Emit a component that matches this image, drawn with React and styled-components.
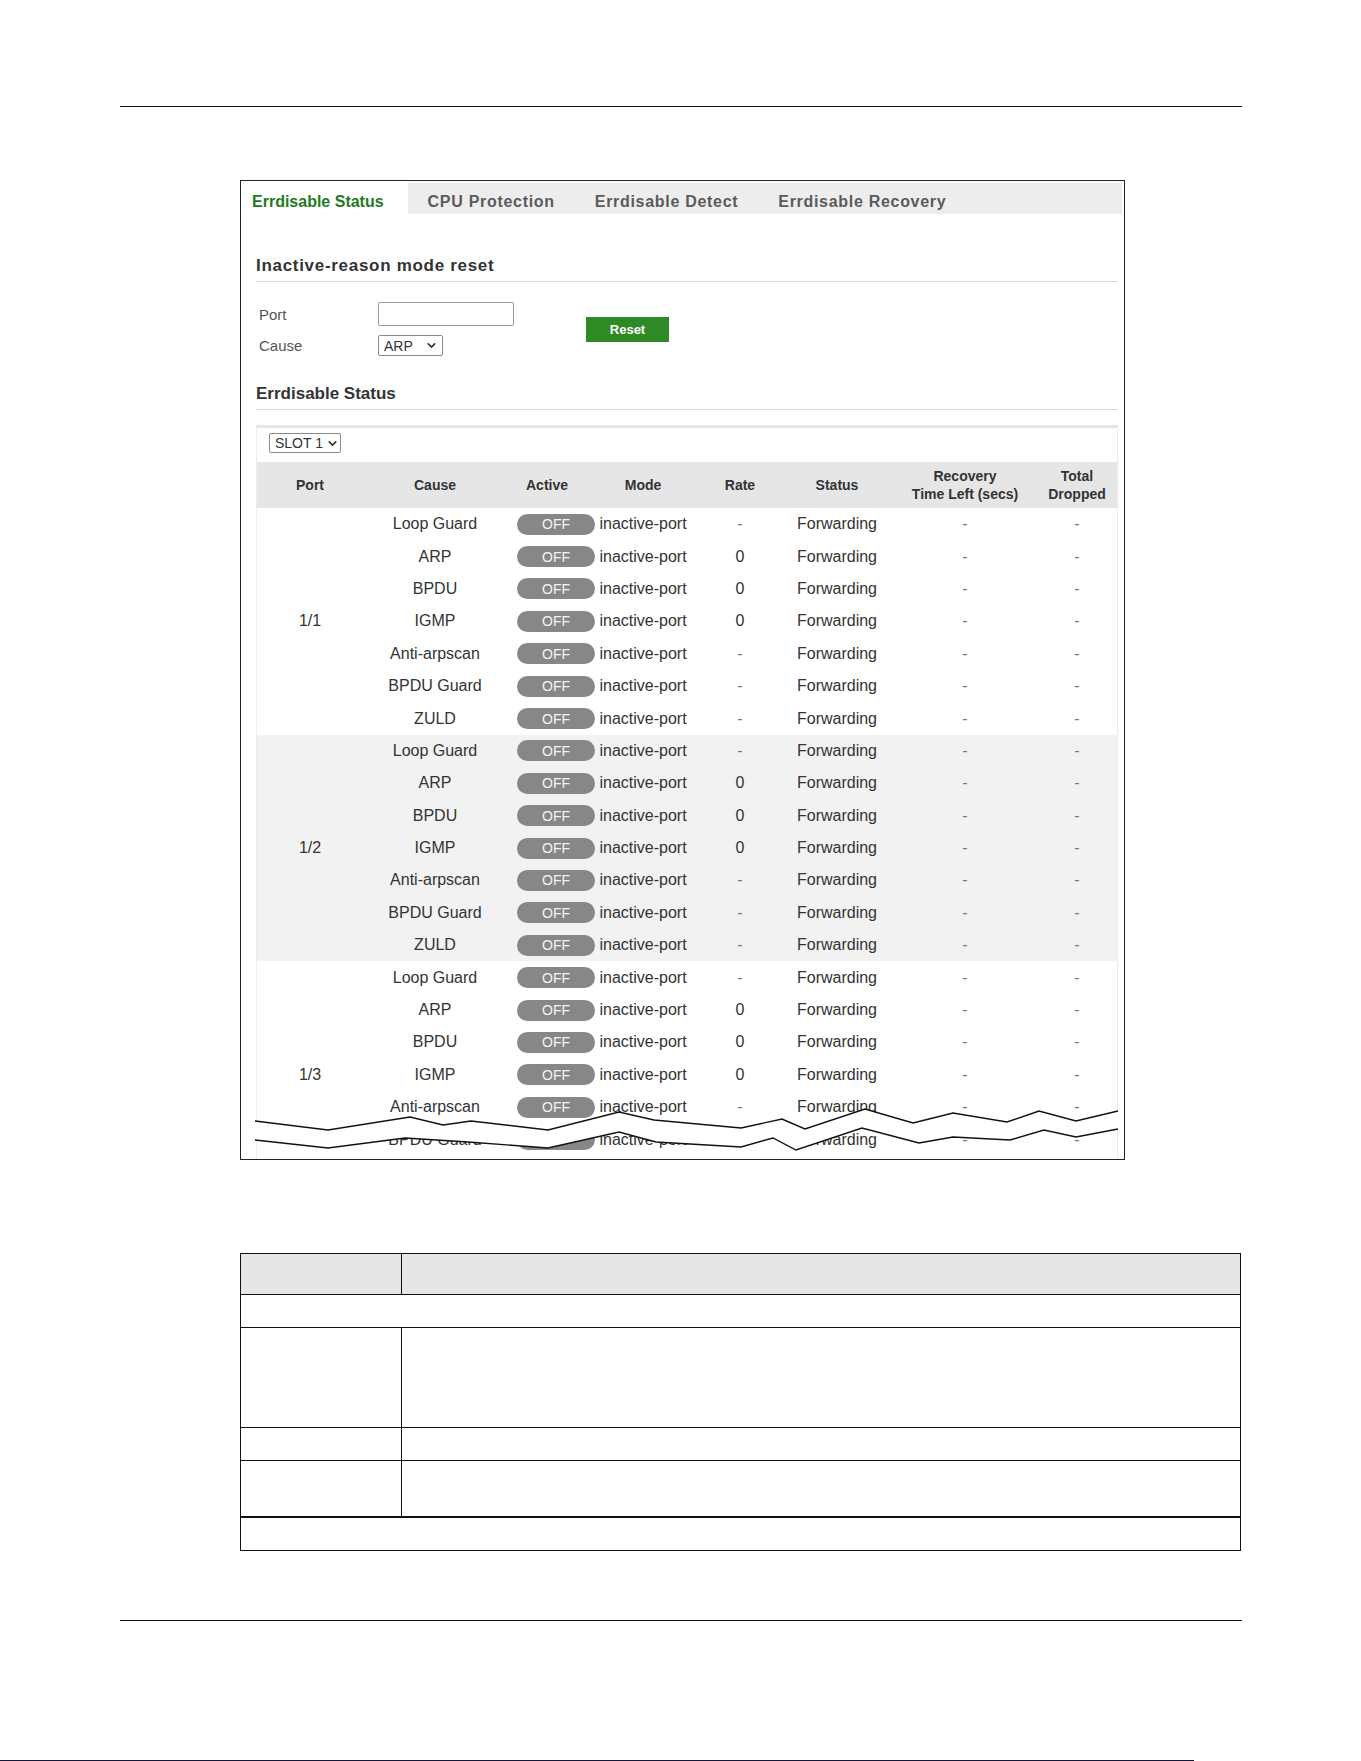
import React from 'react';
import styled, { createGlobalStyle } from 'styled-components';
import { ChevronDown } from 'lucide-react';

const GlobalStyle = createGlobalStyle`
  body {
    margin: 0;
    background: #fff;
    font-family: "Liberation Sans", Arial, sans-serif;
  }
`;

const Page = styled.div`
  width: 1361px;
  height: 1761px;
  display: flex;
  flex-direction: column;
  overflow: hidden;
`;

const Rule = styled.div`
  margin: ${(p) => p.$top}px 0 0 120px;
  width: 1122px;
  border-top: 1px solid #111;
`;

const EdgeLine = styled.div`
  margin-top: auto;
  width: 1194px;
  height: 1px;
  background: #14143a;
`;

const Frame = styled.div`
  position: relative;
  margin: 73px 0 0 240px;
  width: 885px;
  height: 980px;
  box-sizing: border-box;
  border: 1px solid #222;
  padding: 2px 2px 0;
  overflow: hidden;
  background: #fff;
`;

const TabBar = styled.div`
  display: flex;
  height: 31px;
  background: #ededed;
`;

const Tab = styled.div`
  display: flex;
  align-items: center;
  padding: 7px 20px 0;
  font-size: 16px;
  font-weight: bold;
  white-space: nowrap;
  letter-spacing: ${(p) => (p.$active ? 0 : 0.7)}px;
  color: ${(p) => (p.$active ? '#1f7a1f' : '#5b5b5b')};
  background: ${(p) => (p.$active ? '#fff' : 'transparent')};

  &:first-child {
    padding-left: 9px;
    padding-right: 24px;
  }
`;

const Content = styled.div`
  padding: 0 4px 0 13px;
`;

const SectionTitle = styled.div`
  margin-top: ${(p) => p.$top}px;
  padding-bottom: 4px;
  border-bottom: 1px solid #d6d6d6;
  font-size: 17px;
  line-height: 22px;
  font-weight: bold;
  letter-spacing: ${(p) => p.$spacing || 0}px;
  color: #333;
`;

const FormRow = styled.div`
  display: flex;
  align-items: center;
  margin-top: 20px;
  padding-left: 3px;
`;

const FieldGrid = styled.div`
  display: grid;
  grid-template-columns: 119px 136px;
  row-gap: 9px;
  align-items: center;
`;

const Label = styled.span`
  font-size: 15px;
  color: #555;
`;

const TextInput = styled.div`
  width: 136px;
  height: 24px;
  box-sizing: border-box;
  border: 1px solid #9a9a9a;
  border-radius: 2px;
  background: #fff;
`;

const SelectBox = styled.div`
  display: flex;
  align-items: center;
  justify-content: space-between;
  gap: 3px;
  width: ${(p) => p.$w}px;
  height: ${(p) => p.$h}px;
  box-sizing: border-box;
  padding: 0 4px 0 5px;
  border: 1px solid #8a8a8a;
  border-radius: 2px;
  background: #fff;
  font-size: 14px;
  color: #333;
  white-space: nowrap;

  svg {
    flex: none;
  }
`;

const ResetButton = styled.div`
  display: flex;
  align-items: center;
  justify-content: center;
  margin-left: 72px;
  width: 83px;
  height: 25px;
  background: #2e8a24;
  color: #fff;
  font-size: 13px;
  font-weight: bold;
`;

const TableBox = styled.div`
  margin-top: 15px;
  border-top: 3px solid #e6e6e6;
  border-left: 1px solid #ececec;
  border-right: 1px solid #ececec;
`;

const SlotRow = styled.div`
  padding: 5px 0 9px 12px;
`;

const StatusTable = styled.table`
  width: 100%;
  border-collapse: collapse;
  table-layout: fixed;
`;

const HeadCell = styled.th`
  height: 46px;
  padding: 0;
  background: #e6e6e6;
  font-size: 14px;
  line-height: 18px;
  font-weight: bold;
  color: #333;
  text-align: center;
`;

const Row = styled.tr`
  height: 32.4px;
  background: ${(p) => (p.$shade ? '#f2f2f2' : '#fff')};
`;

const Cell = styled.td`
  padding: 0 0 0 ${(p) => p.$pad || 0}px;
  font-size: 16px;
  color: #333;
  text-align: ${(p) => (p.$pad ? 'left' : 'center')};
  vertical-align: middle;
  white-space: nowrap;
`;

const Dash = styled.span`
  color: #777;
`;

const Toggle = styled.span`
  display: inline-flex;
  align-items: center;
  justify-content: center;
  width: 78px;
  height: 21px;
  border-radius: 11px;
  background: #878787;
  color: #f4f4f4;
  font-size: 14px;
  vertical-align: middle;
`;

const BreakMark = styled.svg`
  position: absolute;
  left: -1px;
  top: 909px;
`;

const DocTable = styled.table`
  margin: 93px 0 0 240px;
  width: 1001px;
  border-collapse: collapse;
  table-layout: fixed;
`;

const DocRow = styled.tr`
  height: ${(p) => p.$h}px;
`;

const DocCell = styled.td`
  padding: 0;
  border: 1px solid #111;
  border-top-width: ${(p) => (p.$heavy ? 2 : 1)}px;
  background: ${(p) => (p.$head ? '#e6e6e6' : '#fff')};
`;

const causes = ['Loop Guard', 'ARP', 'BPDU', 'IGMP', 'Anti-arpscan', 'BPDU Guard', 'ZULD'];
const rates = ['-', '0', '0', '0', '-', '-', '-'];
const ports = ['1/1', '1/2', '1/3'];
const widths = [106, 144, 80, 112, 82, 112, 144, 80];

// the torn-off edge across the bottom of the table
const upper = [
  [255, 1121], [328, 1130], [410, 1117], [443, 1125], [471, 1121], [548, 1130],
  [619, 1112], [654, 1120], [741, 1128], [782, 1119], [805, 1129], [865, 1109],
  [913, 1123], [953, 1113], [1007, 1122], [1039, 1111], [1076, 1121], [1118, 1111],
];
const lower = [
  [255, 1140], [328, 1148], [405, 1138], [468, 1142], [548, 1148], [619, 1132],
  [656, 1142], [741, 1147], [773, 1138], [796, 1150], [862, 1128], [919, 1143],
  [953, 1137], [1010, 1140], [1044, 1130], [1076, 1137], [1118, 1129],
];
const pts = (list) => list.map(([x, y]) => `${x},${y}`).join(' ');

function Chevron() {
  return <ChevronDown size={13} strokeWidth={3} color="#333" />;
}

function ValueOrDash({ value }) {
  return value === '-' ? <Dash>-</Dash> : value;
}

function PortGroup({ port, shade }) {
  return causes.map((cause, i) => (
    <Row key={cause} $shade={shade}>
      {i === 0 && <Cell rowSpan={causes.length}>{port}</Cell>}
      <Cell>{cause}</Cell>
      <Cell $pad={10}>
        <Toggle>OFF</Toggle>
      </Cell>
      <Cell>inactive-port</Cell>
      <Cell>
        <ValueOrDash value={rates[i]} />
      </Cell>
      <Cell>Forwarding</Cell>
      <Cell>
        <Dash>-</Dash>
      </Cell>
      <Cell>
        <Dash>-</Dash>
      </Cell>
    </Row>
  ));
}

export default function App() {
  return (
    <Page>
      <GlobalStyle />
      <Rule $top={106} />

      <Frame>
        <TabBar>
          <Tab $active>Errdisable Status</Tab>
          <Tab>CPU Protection</Tab>
          <Tab>Errdisable Detect</Tab>
          <Tab>Errdisable Recovery</Tab>
        </TabBar>

        <Content>
          <SectionTitle $top={41} $spacing={0.7}>
            Inactive-reason mode reset
          </SectionTitle>
          <FormRow>
            <FieldGrid>
              <Label>Port</Label>
              <TextInput />
              <Label>Cause</Label>
              <SelectBox $w={65} $h={21}>
                ARP
                <Chevron />
              </SelectBox>
            </FieldGrid>
            <ResetButton>Reset</ResetButton>
          </FormRow>

          <SectionTitle $top={27}>Errdisable Status</SectionTitle>
          <TableBox>
            <SlotRow>
              <SelectBox $w={72} $h={20}>
                SLOT 1
                <Chevron />
              </SelectBox>
            </SlotRow>
            <StatusTable>
              <colgroup>
                {widths.map((w, i) => (
                  <col key={i} style={{ width: w }} />
                ))}
              </colgroup>
              <thead>
                <tr>
                  <HeadCell>Port</HeadCell>
                  <HeadCell>Cause</HeadCell>
                  <HeadCell>Active</HeadCell>
                  <HeadCell>Mode</HeadCell>
                  <HeadCell>Rate</HeadCell>
                  <HeadCell>Status</HeadCell>
                  <HeadCell>
                    Recovery
                    <br />
                    Time Left (secs)
                  </HeadCell>
                  <HeadCell>
                    Total
                    <br />
                    Dropped
                  </HeadCell>
                </tr>
              </thead>
              <tbody>
                {ports.map((port, i) => (
                  <PortGroup key={port} port={port} shade={i === 1} />
                ))}
              </tbody>
            </StatusTable>
          </TableBox>
        </Content>

        <BreakMark width="885" height="70" viewBox="240 1090 885 70">
          <polygon points={pts([...upper, ...lower.slice().reverse()])} fill="#fff" />
          <polyline points={pts(upper)} fill="none" stroke="#111" strokeWidth="1.4" />
          <polyline points={pts(lower)} fill="none" stroke="#111" strokeWidth="1.4" />
        </BreakMark>
      </Frame>

      <DocTable>
        <colgroup>
          <col style={{ width: 161 }} />
          <col />
        </colgroup>
        <tbody>
          <DocRow $h={41}>
            <DocCell $head />
            <DocCell $head />
          </DocRow>
          <DocRow $h={33}>
            <DocCell colSpan={2} />
          </DocRow>
          <DocRow $h={100}>
            <DocCell />
            <DocCell />
          </DocRow>
          <DocRow $h={33}>
            <DocCell />
            <DocCell />
          </DocRow>
          <DocRow $h={56}>
            <DocCell />
            <DocCell />
          </DocRow>
          <DocRow $h={34}>
            <DocCell colSpan={2} $heavy />
          </DocRow>
        </tbody>
      </DocTable>

      <Rule $top={69} />
      <EdgeLine />
    </Page>
  );
}
